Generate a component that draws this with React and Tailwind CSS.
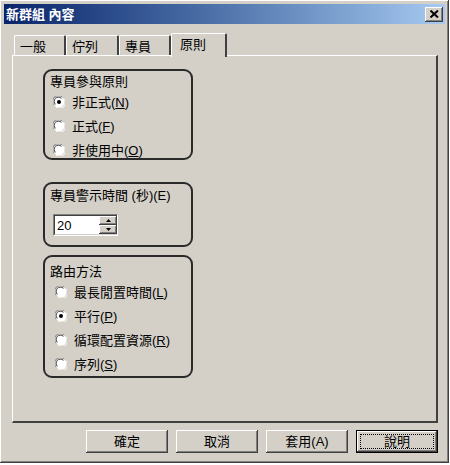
import React from "react";

const FONT = "font-['Liberation_Sans','Noto_Sans_CJK_TC',sans-serif]";

const raised =
  "bg-[#d4d0c8] shadow-[inset_-1px_-1px_0_#404040,inset_1px_1px_0_#ffffff,inset_-2px_-2px_0_#808080,inset_2px_2px_0_#d4d0c8]";

function Radio({ checked }) {
  return (
    <svg width="12" height="12" viewBox="0 0 12 12" className="shrink-0">
      <circle cx="6" cy="6" r="5.5" fill="#ffffff" />
      <path d="M1.2 9.2 A5.3 5.3 0 0 1 9.2 1.2" stroke="#808080" strokeWidth="1" fill="none" />
      <path d="M2.4 8.4 A4.2 4.2 0 0 1 8.4 2.4" stroke="#404040" strokeWidth="1" fill="none" />
      <path d="M10.8 2.8 A5.3 5.3 0 0 1 2.8 10.8" stroke="#ffffff" strokeWidth="1" fill="none" />
      {checked && <circle cx="6" cy="6" r="2" fill="#000000" />}
    </svg>
  );
}

function Option({ label, hotkey, checked, indent, h }) {
  return (
    <div className={"flex items-center " + indent + " " + h}>
      <Radio checked={checked} />
      <span className="ml-[7px] text-[13px] leading-none text-black">
        {label}(<u>{hotkey}</u>)
      </span>
    </div>
  );
}

function Group({ title, className, children }) {
  return (
    <div className={"rounded-[9px] border-2 border-[#2a2a2a] w-[150px] " + className}>
      <div className="pl-[5px] text-[13px] leading-[17px] text-black">{title}</div>
      {children}
    </div>
  );
}

function Tab({ label, w, selected }) {
  if (selected) {
    return (
      <div
        className={
          "relative z-10 -mb-[2px] h-[24px] rounded-t-[2px] border-t border-l border-white border-r-2 border-r-[#404040] bg-[#d4d0c8] pl-[8px] pt-[3px] text-[13px] leading-[16px] " +
          w
        }
      >
        {label}
      </div>
    );
  }
  return (
    <div
      className={
        "h-[20px] rounded-t-[2px] border-t border-l border-white border-r-2 border-r-[#404040] bg-[#d4d0c8] pl-[5px] pt-[4px] text-[13px] leading-[14px] " +
        w
      }
    >
      {label}
    </div>
  );
}

function Button({ children, focused }) {
  if (focused) {
    return (
      <div className="w-[82px] h-[23px] border border-black">
        <div className={"h-full w-full p-[3px] " + raised}>
          <div className="h-full w-full border border-dotted border-black flex items-center justify-center text-[13px] leading-none">
            {children}
          </div>
        </div>
      </div>
    );
  }
  return (
    <div className={"w-[82px] h-[23px] flex items-center justify-center text-[13px] leading-none " + raised}>
      {children}
    </div>
  );
}

export default function App() {
  return (
    <div className={"w-[450px] h-[465px] bg-white " + FONT}>
      <div className={"w-[449px] h-[463px] p-[4px] flex flex-col " + raised}>
        {/* Title bar */}
        <div className="h-[20px] flex items-center justify-between bg-gradient-to-r from-[#0a246a] to-[#a6caf0]">
          <span className="pl-[2px] text-[13px] font-bold leading-none text-white">新群組 內容</span>
          <div className={"mr-[2px] w-[18px] h-[15px] flex items-center justify-center " + raised}>
            <svg width="9" height="8" viewBox="0 0 9 8">
              <path d="M0.5 0.5 L8 7.5 M8 0.5 L0.5 7.5" stroke="#000" strokeWidth="2" />
            </svg>
          </div>
        </div>

        {/* Tabs */}
        <div className="mt-[9px] ml-[10px] h-[22px] flex items-end">
          <Tab label="一般" w="w-[52px]" />
          <Tab label="佇列" w="w-[53px]" />
          <Tab label="專員" w="w-[52px]" />
          <Tab label="原則" w="w-[56px]" selected />
        </div>

        {/* Panel */}
        <div className="ml-[8px] mr-[7px] h-[368px] border-t border-l border-white border-r-2 border-b-2 border-r-[#404040] border-b-[#404040] pl-[30px] pt-[13px]">
          <Group title="專員參與原則" className="pt-[2px] h-[91px]">
            <Option label="非正式" hotkey="N" checked indent="pl-[8px]" h="h-[24px]" />
            <Option label="正式" hotkey="F" indent="pl-[8px]" h="h-[24px]" />
            <Option label="非使用中" hotkey="O" indent="pl-[8px]" h="h-[24px]" />
          </Group>

          <Group title="專員警示時間 (秒)(E)" className="mt-[22px] pt-[3px] h-[65px]">
            <div className="ml-[8px] mt-[10px] w-[65px] h-[22px] flex border border-[#808080] border-r-white border-b-white">
              <div className="flex-1 bg-white border border-[#404040] border-r-0 border-b-[#d4d0c8] pl-[2px] text-[13px] leading-[19px]">
                20
              </div>
              <div className="w-[18px] flex flex-col bg-white border-t border-b border-t-[#404040] border-b-[#d4d0c8]">
                <div className={"flex-1 flex items-center justify-center " + raised}>
                  <svg width="5" height="3" viewBox="0 0 5 3"><path d="M2.5 0 L5 3 L0 3 Z" fill="#000" /></svg>
                </div>
                <div className={"flex-1 flex items-center justify-center " + raised}>
                  <svg width="5" height="3" viewBox="0 0 5 3"><path d="M0 0 L5 0 L2.5 3 Z" fill="#000" /></svg>
                </div>
              </div>
            </div>
          </Group>

          <Group title="路由方法" className="mt-[8px] pt-[6px] h-[123px]">
            <Option label="最長閒置時間" hotkey="L" indent="pl-[10px]" h="h-[24px]" />
            <Option label="平行" hotkey="P" checked indent="pl-[10px]" h="h-[24px]" />
            <Option label="循環配置資源" hotkey="R" indent="pl-[10px]" h="h-[24px]" />
            <Option label="序列" hotkey="S" indent="pl-[10px]" h="h-[24px]" />
          </Group>
        </div>

        {/* Buttons */}
        <div className="mt-[7px] mr-[7px] flex justify-end gap-[8px]">
          <Button>確定</Button>
          <Button>取消</Button>
          <Button>套用(A)</Button>
          <Button focused>說明</Button>
        </div>
      </div>
    </div>
  );
}
